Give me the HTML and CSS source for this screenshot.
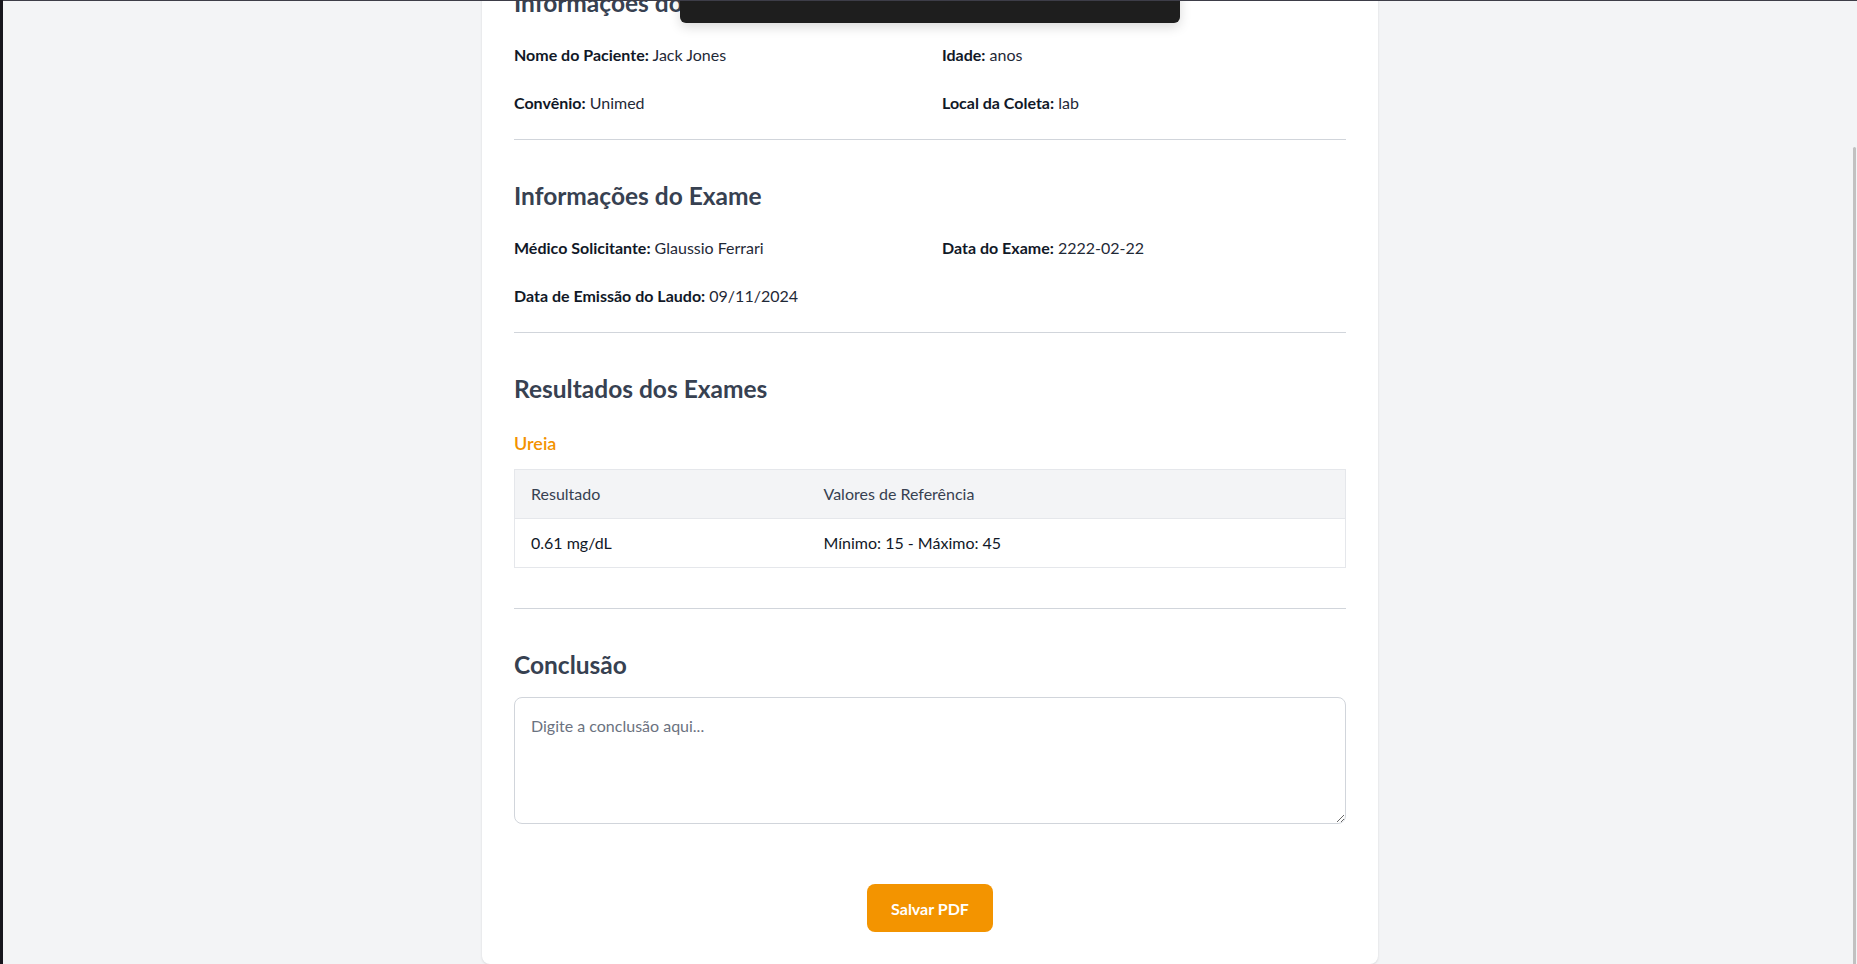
FILE: index.html
```html
<!DOCTYPE html>
<html lang="pt-BR">
<head>
<meta charset="utf-8">
<title>Laudo</title>
<link rel="stylesheet" href="styles.css">
</head>
<body>
<div class="viewport">
  <main class="card">
    <section class="section">
      <h2 class="section-title">Informações do Paciente</h2>
      <div class="info-grid">
        <p><strong>Nome do Paciente:</strong> Jack Jones</p>
        <p><strong>Idade:</strong> anos</p>
        <p><strong>Convênio:</strong> Unimed</p>
        <p><strong>Local da Coleta:</strong> lab</p>
      </div>
    </section>
    <section class="section">
      <h2 class="section-title">Informações do Exame</h2>
      <div class="info-grid">
        <p><strong>Médico Solicitante:</strong> Glaussio Ferrari</p>
        <p><strong>Data do Exame:</strong> 2222-02-22</p>
        <p><strong>Data de Emissão do Laudo:</strong> 09/11/2024</p>
      </div>
    </section>
    <section class="section">
      <h2 class="section-title">Resultados dos Exames</h2>
      <div class="exam">
        <h3 class="exam-name">Ureia</h3>
        <table class="result-table">
          <thead>
            <tr><th class="col-result">Resultado</th><th>Valores de Referência</th></tr>
          </thead>
          <tbody>
            <tr><td class="col-result">0.61 mg/dL</td><td>Mínimo: 15 - Máximo: 45</td></tr>
          </tbody>
        </table>
      </div>
    </section>
    <section class="section section-last">
      <h2 class="section-title title-tight">Conclusão</h2>
      <textarea class="conclusion" placeholder="Digite a conclusão aqui..."></textarea>
    </section>
    <div class="actions">
      <button class="btn-save" type="button">Salvar PDF</button>
    </div>
  </main>
  <div class="toast">
    <span class="toast-text"><span class="accent">Laudo</span> salvo com sucesso! <span class="accent">PDF</span> gerado.</span>
  </div>
  <div class="scroll-thumb"></div>
</div>
</body>
</html>
```

FILE: styles.css
```css
* { box-sizing: border-box; }

html, body {
  margin: 0;
  padding: 0;
  height: 100%;
}

body {
  background: #17161d;
  font-family: Lato, "Liberation Sans", sans-serif;
  color: #111827;
  font-size: 16px;
  line-height: 24px;
}

.viewport {
  position: relative;
  margin-left: 3px;
  height: 964px;
  overflow: hidden;
  background: #f3f4f6;
  border-top: 1px solid #3d3d48;
}

.card {
  width: 896px;
  margin: -46px auto 0;
  background: #fff;
  border-radius: 8px;
  box-shadow: 0 1px 3px rgba(0,0,0,0.08), 0 1px 2px rgba(0,0,0,0.04);
  padding: 32px 32px 32px;
}

.section {
  padding-bottom: 24px;
  border-bottom: 1px solid #d1d5db;
  margin-bottom: 40px;
}

.section-last {
  border-bottom: none;
  padding-bottom: 0;
  margin-bottom: 60px;
}

.section-title {
  margin: 0 0 24px;
  font-size: 24.5px;
  line-height: 32px;
  font-weight: 700;
  color: #374151;
}

.title-tight { margin-bottom: 16px; }

.info-grid {
  display: grid;
  grid-template-columns: 1fr 1fr;
  column-gap: 24px;
  row-gap: 24px;
}

.info-grid p {
  margin: 0;
  color: #1f2937;
}

.info-grid strong {
  font-weight: 700;
  color: #111827;
}

.exam { margin-bottom: 16px; }

.exam-name {
  margin: 0 0 12px;
  font-size: 18px;
  line-height: 28px;
  font-weight: 600;
  color: #f39200;
}

.result-table {
  width: 100%;
  border-collapse: collapse;
  border: 1px solid #e5e7eb;
}

.result-table th,
.result-table td {
  text-align: left;
  padding: 12px 16px;
  font-size: 16px;
  line-height: 24px;
}

.result-table th {
  background: #f3f4f6;
  font-weight: 400;
  color: #374151;
  border-bottom: 1px solid #e5e7eb;
}

.result-table td {
  color: #111827;
}

.col-result { width: 293px; }

.conclusion {
  display: block;
  width: 100%;
  height: 127px;
  padding: 16px 16px;
  border: 1px solid #d1d5db;
  border-radius: 8px;
  font-family: inherit;
  font-size: 16px;
  line-height: 24px;
  color: #111827;
  resize: vertical;
}

.conclusion::placeholder { color: #6b7280; }

.actions {
  display: flex;
  justify-content: center;
}

.btn-save {
  width: 126px;
  height: 48px;
  border: none;
  border-radius: 8px;
  background: #f39400;
  color: #fff;
  font-family: inherit;
  font-size: 16px;
  font-weight: 700;
}

.toast {
  position: absolute;
  top: -30px;
  left: 50%;
  margin-left: -250px;
  width: 500px;
  height: 52px;
  background: #1e1e1e;
  border-radius: 6px;
  box-shadow: 0 4px 12px rgba(0,0,0,0.15);
  display: flex;
  align-items: center;
  justify-content: center;
  color: #fff;
  font-size: 16px;
}

.toast-text { position: relative; top: -6px; }

.accent { color: #f39200; }

.scroll-thumb {
  position: absolute;
  right: 1px;
  top: 146px;
  bottom: 0;
  width: 3px;
  border-radius: 2px 2px 0 0;
  background: #c1c1c1;
}
```
